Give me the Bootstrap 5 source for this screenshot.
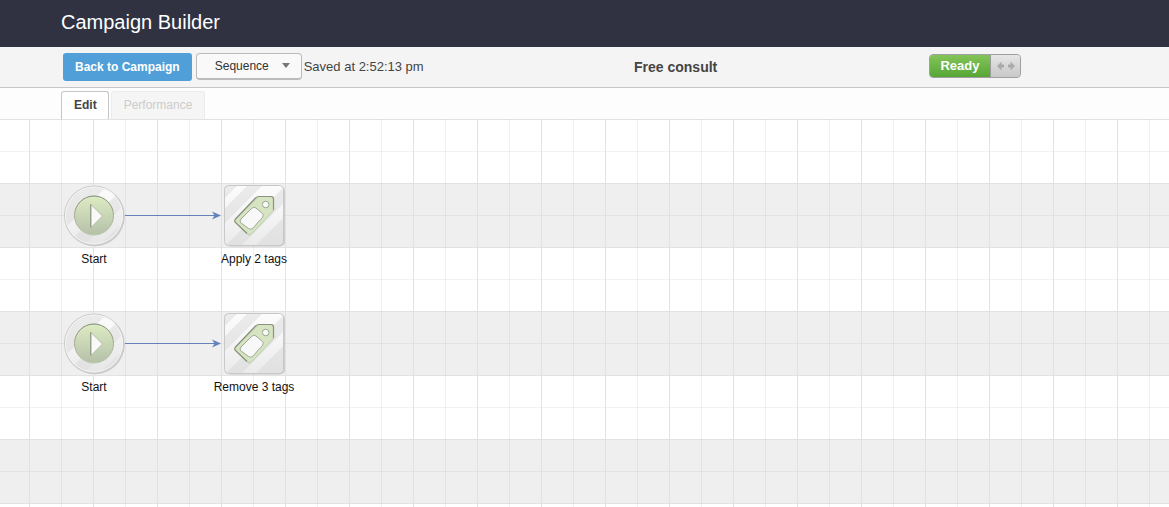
<!DOCTYPE html>
<html lang="en">
<head>
<meta charset="utf-8">
<meta name="viewport" content="width=device-width, initial-scale=1">
<title>Campaign Builder</title>
<link href="https://cdn.jsdelivr.net/npm/bootstrap@5.3.0/dist/css/bootstrap.min.css" rel="stylesheet">
<style>
body { font-family: "Liberation Sans", Arial, sans-serif; font-size: 12px; line-height: 16px; color: #444; }
.app-header { background: #303242; height: 47px; padding: 0 61px; }
.app-header h1 { font-size: 20px; line-height: 24px; font-weight: 400; padding-bottom: 3px; }
.toolbar { display: grid; grid-template-columns: 571fr 295fr 240fr; height: 41px; padding-left: 63px; background: #f4f4f4; border-bottom: 1px solid #c6c6c6; }
.btn-back { font-size: 12px; line-height: 16px; font-weight: 700; padding: 6px 12px; border: 0; border-radius: 3px; background: #519fd8; }
.btn-sequence, .btn-sequence:hover { font-size: 12px; line-height: 16px; color: #333; background: #f9f9f9; border: 1px solid #bbb; border-bottom-width: 2px; border-radius: 4px; width: 106px; padding: 4px 11px 4px 18px; margin-bottom: 2px; }
.caret-down { width: 8px; height: 5px; }
.saved-text { font-size: 13px; margin-left: 2px; }
.campaign-name { font-size: 14px; line-height: 20px; font-weight: 700; }
.ready-switch { width: 92px; height: 24px; margin-bottom: 2px; border: 1px solid #a0a0a0; border-radius: 4px; overflow: hidden; background: #ddd; }
.ready-label { width: 61px; font-size: 13px; line-height: 22px; font-weight: 700; color: #fff; background: linear-gradient(#83c459, #57a637); border-right: 1px solid #999; }
.ready-handle { background: linear-gradient(#e6e6e6, #c8c8c8); }
.tab-strip { height: 31px; padding: 3px 61px 0; background: #fdfdfd; }
.tab-strip .nav-tabs { border: 0; gap: 2px; }
.tab-strip .nav-link, .tab-strip .nav-link:disabled { margin: 0; padding: 5px 12px 7px; font-weight: 700; line-height: 16px; border: 1px solid #ececec; border-bottom: 0; border-radius: 3px 3px 0 0; background: #f5f5f5; color: #ccc; }
.tab-strip .nav-link:disabled { font-weight: 400; }
.tab-strip .nav-link.active { padding-right: 11px; background: #fff; border-color: #c6c6c6; color: #444; }
.grid-canvas {
  min-height: 388px;
  background:
    linear-gradient(90deg, #e2e2e2 1px, transparent 1px) 29px 0 / 64px 100%,
    linear-gradient(90deg, rgba(0,0,0,.05) 1px, transparent 1px) 61px 0 / 64px 100%,
    linear-gradient(#e2e2e2 1px, transparent 1px) 0 0 / 100% 64px,
    linear-gradient(rgba(0,0,0,.05) 1px, transparent 1px) 0 32px / 100% 64px,
    linear-gradient(#fff 65px, #efefef 65px) 0 0 / 100% 128px;
}
.flow-node { position: absolute; width: 96px; color: #111; text-align: center; }
.flow-node svg { display: block; margin: 0 auto 4px; }
.flow-link { position: absolute; }
.row-a { top: 64px; }
.row-b { top: 192px; }
.col-start { left: 46px; }
.col-tags { left: 206px; }
.flow-link.row-a { top: 91px; left: 125px; }
.flow-link.row-b { top: 219px; left: 125px; }
</style>
</head>
<body class="d-flex flex-column min-vh-100">
<svg width="0" height="0" class="position-absolute" aria-hidden="true">
  <defs>
    <linearGradient id="metal" x2="0" y2="1"><stop offset="0" stop-color="#ebebeb"/><stop offset="1" stop-color="#e1e1e1"/></linearGradient>
    <linearGradient id="green" x2="0" y2="1"><stop offset="0" stop-color="#dcecc3"/><stop offset="1" stop-color="#b5c0a8"/></linearGradient>
    <linearGradient id="shine" gradientUnits="userSpaceOnUse" x1="0" y1="0" x2="0" y2="64"><stop offset="0" stop-color="#fff" stop-opacity=".85"/><stop offset="1" stop-color="#fff" stop-opacity=".3"/></linearGradient>
    <linearGradient id="edge" x2="0" y2="1"><stop offset="0" stop-color="#7d8574"/><stop offset=".5" stop-color="#a3ad98"/><stop offset="1" stop-color="#bdc8b0"/></linearGradient>
    <clipPath id="disc"><circle cx="32" cy="32" r="29"/></clipPath>
    <clipPath id="tile"><rect x="3" y="3" width="58" height="59" rx="4"/></clipPath>
    <symbol id="start-icon" viewBox="0 0 64 64">
      <circle cx="32.800" cy="33.300" r="30" fill="#000" opacity=".14"/>
      <circle cx="32" cy="32.500" r="29.500" fill="url(#metal)" stroke="#c8c8c8"/>
      <g clip-path="url(#disc)" fill="url(#shine)"><path d="M0 48 48 0H66L2 64H0Z"/><path d="M20 64 64 20V36L36 64Z" opacity=".6"/></g>
      <circle cx="32" cy="32.500" r="28.500" fill="none" stroke="#f4f4f4"/>
      <circle cx="32" cy="32.500" r="19.500" fill="url(#green)" stroke="url(#edge)"/>
      <path d="M29 21.500V44.500L40.500 33Z" fill="#f9f9f9" stroke="#a7b199" stroke-width=".8"/>
      <path d="M28.700 21V44.500" stroke="#8f9783"/>
    </symbol>
    <symbol id="tag-icon" viewBox="0 0 64 64">
      <rect x="3" y="3" width="60" height="60.500" rx="5" fill="#000" opacity=".14"/>
      <rect x="2.500" y="2.500" width="59" height="60" rx="4" fill="url(#metal)" stroke="#c8c8c8"/>
      <g clip-path="url(#tile)" fill="url(#shine)"><path d="M0 18 18 0H28L0 28Z"/><path d="M0 43 43 0H66L2 64H0Z"/><path d="M18 64 64 18V32L32 64Z"/></g>
      <path d="M37 13.500H49Q51.500 13.500 51.500 16V27.500L29.500 51Q27.500 53 25.500 51L13.500 39.500Q12 38 13.500 36Z" fill="#d6e4c1" stroke="#bdcba8"/>
      <path d="M51.500 27V16Q51.500 13.500 49 13.500H37Q35 13.500 33.500 15L13.500 36Q12 38 13.500 39.500L25 50.500" fill="none" stroke="#8a937f" stroke-width="1.200"/>
      <path d="M29.500 25.500Q32 23 34 25L40.500 30.500Q42 32.500 40.500 34.500L30.500 45.500Q28.500 47 26.500 45.500L18.500 39.500Q17.500 38 19 36Z" fill="#f8f8f8" stroke="#9da692"/>
      <circle cx="43.700" cy="21.500" r="3.300" fill="#fafafa" stroke="#9da692"/>
    </symbol>
    <symbol id="arrow-icon" viewBox="0 0 96 10"><path d="M0 5.500H90" stroke="#6482ba"/><path d="M87 1.500 96 5.500 87 9.500 89.500 5.500Z" fill="#6482ba"/></symbol>
  </defs>
</svg>

<header class="app-header d-flex align-items-center"><h1 class="m-0 text-white">Campaign Builder</h1></header>

<div class="toolbar align-items-center">
  <div class="d-flex align-items-center">
    <button type="button" class="btn btn-primary btn-back text-nowrap me-1">Back to Campaign</button>
    <button type="button" class="btn btn-sequence d-flex align-items-center justify-content-between">Sequence
      <svg class="caret-down" viewBox="0 0 8 5" aria-hidden="true"><path d="M0 0H8L4 5Z" fill="#777"/></svg></button>
    <span class="saved-text text-nowrap">Saved at 2:52:13 pm</span>
  </div>
  <div class="campaign-name text-nowrap">Free consult</div>
  <button type="button" class="ready-switch d-flex p-0" aria-pressed="true">
    <span class="ready-label h-100">Ready</span>
    <span class="ready-handle flex-grow-1 h-100 d-flex align-items-center justify-content-center">
      <svg width="20" height="10" viewBox="0 0 20 10" aria-hidden="true"><path d="M1 5 5.500.5V3.500H8V6.500H5.500V9.500ZM19 5 14.500.5V3.500H12V6.500H14.500V9.500Z" fill="#aaa"/></svg>
    </span>
  </button>
</div>

<div class="tab-strip">
  <div class="nav nav-tabs" role="tablist">
    <button type="button" class="nav-link active" role="tab" aria-selected="true">Edit</button>
    <button type="button" class="nav-link" role="tab" aria-selected="false" disabled>Performance</button>
  </div>
</div>

<main class="grid-canvas position-relative flex-grow-1">
  <svg class="flow-link row-a" width="96" height="10" aria-hidden="true"><use href="#arrow-icon"/></svg>
  <svg class="flow-link row-b" width="96" height="10" aria-hidden="true"><use href="#arrow-icon"/></svg>
  <div class="flow-node row-a col-start"><svg width="64" height="64" aria-hidden="true"><use href="#start-icon"/></svg>Start</div>
  <div class="flow-node row-a col-tags"><svg width="64" height="64" aria-hidden="true"><use href="#tag-icon"/></svg>Apply 2 tags</div>
  <div class="flow-node row-b col-start"><svg width="64" height="64" aria-hidden="true"><use href="#start-icon"/></svg>Start</div>
  <div class="flow-node row-b col-tags"><svg width="64" height="64" aria-hidden="true"><use href="#tag-icon"/></svg>Remove 3 tags</div>
</main>
<script src="https://cdn.jsdelivr.net/npm/bootstrap@5.3.0/dist/js/bootstrap.bundle.min.js"></script>
</body>
</html>
